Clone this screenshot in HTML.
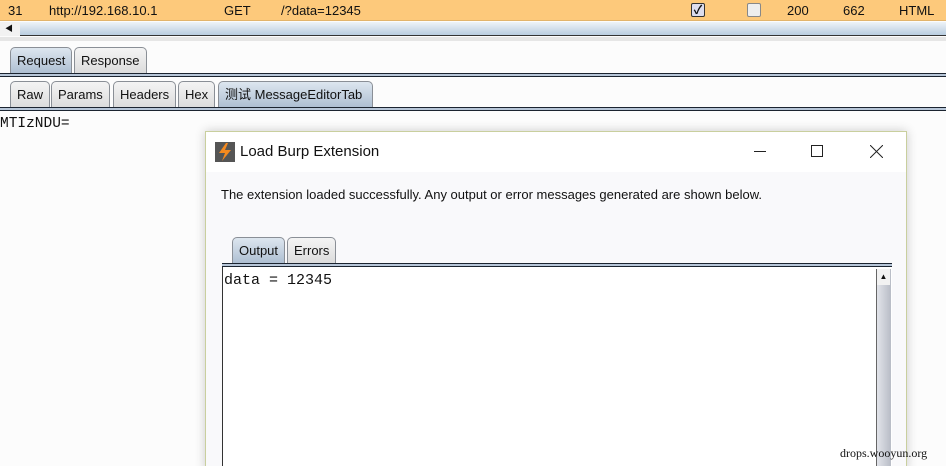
<!DOCTYPE html><html><head><style>
*{margin:0;padding:0;box-sizing:border-box}
html,body{width:946px;height:466px;overflow:hidden}
body{background:#fcfcfc;font-family:"Liberation Sans","Noto Sans CJK SC",sans-serif;font-size:13px;position:relative;color:#111}
.a{position:absolute}
.tab{position:absolute;border:1px solid #8a8f96;border-bottom:none;border-radius:5px 5px 0 0;background:linear-gradient(#f4f4f4,#dcdcdc);padding:0 6px;line-height:25px;height:26px}
.sel{background:linear-gradient(#dde6ef,#aebfd2)}
.bar{position:absolute;left:0;right:0;height:4px;border-top:1px solid #1b2430;border-bottom:1px solid #1b2430;background:#b7c6d8}
</style></head><body>
<div class="a" style="left:0;top:0;width:946px;height:21px;background:#fdc97b;border-bottom:1px solid #e2b46c"></div>
<div class="a" style="left:8px;top:3px">31</div>
<div class="a" style="left:49px;top:3px">http://192.168.10.1</div>
<div class="a" style="left:224px;top:3px">GET</div>
<div class="a" style="left:281px;top:3px">/?data=12345</div>
<div class="a" style="left:691px;top:3px;width:14px;height:14px;border:1px solid #333;border-radius:2px;background:#dde;font-size:12px;line-height:12px;text-align:center;font-weight:bold">✓</div>
<div class="a" style="left:747px;top:3px;width:14px;height:14px;border:1px solid #888;border-radius:2px;background:#eee"></div>
<div class="a" style="left:787px;top:3px">200</div>
<div class="a" style="left:843px;top:3px">662</div>
<div class="a" style="left:899px;top:3px">HTML</div>
<div class="a" style="left:0;top:22px;width:946px;height:14px;background:linear-gradient(#eef3f8,#b9cde0);border-bottom:1px solid #333"></div>
<div class="a" style="left:0;top:22px;width:20px;height:14px;background:#f2f2f2;font-size:8px;line-height:14px;padding-left:5px">◀</div>
<div class="a" style="left:0;top:37px;width:946px;height:4px;background:#e6e6e6"></div>
<div class="tab sel" style="left:10px;top:47px;height:26px">Request</div>
<div class="tab" style="left:74px;top:47px;height:26px">Response</div>
<div class="bar" style="top:73px"></div>
<div class="tab" style="left:10px;top:81px">Raw</div>
<div class="tab" style="left:51px;top:81px">Params</div>
<div class="tab" style="left:113px;top:81px">Headers</div>
<div class="tab" style="left:178px;top:81px">Hex</div>
<div class="tab sel" style="left:218px;top:81px;width:155px">测试 MessageEditorTab</div>
<div class="bar" style="top:107px"></div>
<div class="a" style="left:0;top:116px;font-family:'Liberation Mono',monospace;font-size:14.5px">MTIzNDU=</div>
<div class="a" style="left:205px;top:131px;width:702px;height:340px;background:#f9f9fb;border:1px solid #c9cf9e;box-shadow:0 0 10px rgba(0,0,0,.2)">
 <div class="a" style="left:0;top:0;width:700px;height:40px;background:#fff"></div>
 <svg class="a" style="left:9px;top:10px" width="20" height="20"><rect width="20" height="20" fill="#555"/><path d="M11 1 L4 11 L10 11 L7 19 L16 8 L10 8 L13 1Z" fill="#f58a1f"/></svg>
 <div class="a" style="left:34px;top:11px;font-size:15px">Load Burp Extension</div>
 <div class="a" style="left:548px;top:19px;width:12px;height:1px;background:#222"></div>
 <div class="a" style="left:605px;top:13px;width:12px;height:12px;border:1px solid #222"></div>
 <svg class="a" style="left:664px;top:13px" width="13" height="13"><path d="M0 0L13 13M13 0L0 13" stroke="#222"/></svg>
 <div class="a" style="left:15px;top:55px;font-size:13px">The extension loaded successfully. Any output or error messages generated are shown below.</div>
 <div class="tab sel" style="left:26px;top:105px">Output</div>
 <div class="tab" style="left:81px;top:105px">Errors</div>
 <div class="a" style="left:16px;top:131px;width:670px;height:4px;border-top:1px solid #1b2430;border-bottom:1px solid #1b2430;background:#b7c6d8"></div>
 <div class="a" style="left:16px;top:135px;width:670px;height:210px;background:#fff;border-left:1px solid #333"></div>
 <div class="a" style="left:18px;top:140px;font-family:'Liberation Mono',monospace;font-size:15px">data = 12345</div>
 <div class="a" style="left:670px;top:137px;width:15px;height:210px;background:linear-gradient(90deg,#e2e4ea,#b8bcc6);border-left:1px solid #666"></div>
 <div class="a" style="left:671px;top:137px;width:13px;height:16px;background:#f2f2f2;font-size:8px;text-align:center;line-height:16px">▲</div>
</div>
<div class="a" style="left:840px;top:446px;font-family:'Liberation Serif',serif;font-size:12px">drops.wooyun.org</div>
</body></html>
